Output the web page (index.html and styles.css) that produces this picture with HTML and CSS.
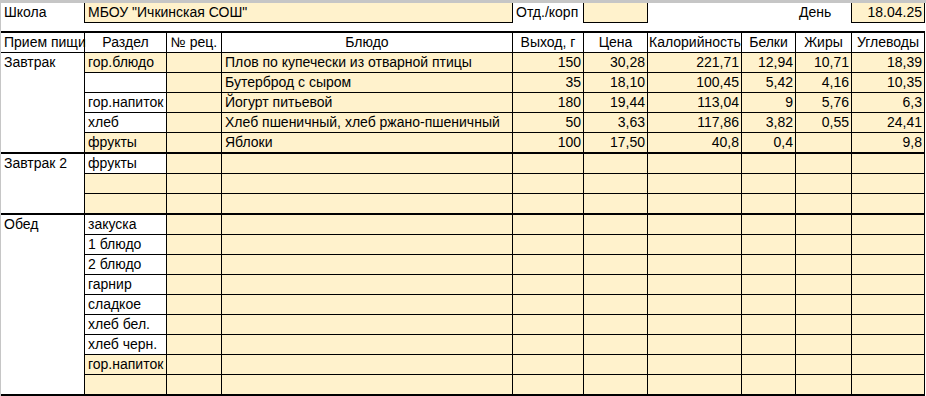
FILE: index.html
```html
<!DOCTYPE html>
<html lang="ru">
<head>
<meta charset="utf-8">
<title>Меню</title>
<link rel="stylesheet" href="styles.css">
</head>
<body>
<div class="sheet">
  <!-- top info row -->
  <div class="c info-label bR">Школа</div>
  <div class="c fill bR bB span3">МБОУ "Ичкинская СОШ"</div>
  <div class="c info-label bR">Отд./корп</div>
  <div class="c fill bR bB"></div>
  <div class="c span2"></div>
  <div class="c info-label bR">День</div>
  <div class="c fill bR bB num">18.04.25</div>

  <div class="spacer"></div>

  <!-- header -->
  <div class="c hd hd-first">Прием пищи</div>
  <div class="c hd">Раздел</div>
  <div class="c hd">№ рец.</div>
  <div class="c hd">Блюдо</div>
  <div class="c hd">Выход, г</div>
  <div class="c hd">Цена</div>
  <div class="c hd">Калорийность</div>
  <div class="c hd">Белки</div>
  <div class="c hd">Жиры</div>
  <div class="c hd">Углеводы</div>

  <!-- Завтрак -->
  <div class="c meal span5">Завтрак</div>
  <div class="c g fill">гор.блюдо</div><div class="c g fill"></div><div class="c g fill">Плов по купечески из отварной птицы</div>
  <div class="c g fill num">150</div><div class="c g fill num">30,28</div><div class="c g fill num">221,71</div><div class="c g fill num">12,94</div><div class="c g fill num">10,71</div><div class="c g fill num">18,39</div>

  <div class="c g"></div><div class="c g fill"></div><div class="c g fill">Бутерброд с сыром</div>
  <div class="c g fill num">35</div><div class="c g fill num">18,10</div><div class="c g fill num">100,45</div><div class="c g fill num">5,42</div><div class="c g fill num">4,16</div><div class="c g fill num">10,35</div>

  <div class="c g">гор.напиток</div><div class="c g fill"></div><div class="c g fill">Йогурт питьевой</div>
  <div class="c g fill num">180</div><div class="c g fill num">19,44</div><div class="c g fill num">113,04</div><div class="c g fill num">9</div><div class="c g fill num">5,76</div><div class="c g fill num">6,3</div>

  <div class="c g">хлеб</div><div class="c g fill"></div><div class="c g fill">Хлеб пшеничный, хлеб ржано-пшеничный</div>
  <div class="c g fill num">50</div><div class="c g fill num">3,63</div><div class="c g fill num">117,86</div><div class="c g fill num">3,82</div><div class="c g fill num">0,55</div><div class="c g fill num">24,41</div>

  <div class="c g end fill">фрукты</div><div class="c g end fill"></div><div class="c g end fill">Яблоки</div>
  <div class="c g end fill num">100</div><div class="c g end fill num">17,50</div><div class="c g end fill num">40,8</div><div class="c g end fill num">0,4</div><div class="c g end fill num"></div><div class="c g end fill num">9,8</div>

  <!-- Завтрак 2 -->
  <div class="c meal span3">Завтрак 2</div>
  <div class="c g">фрукты</div><div class="c g fill"></div><div class="c g fill"></div><div class="c g fill"></div><div class="c g fill"></div><div class="c g fill"></div><div class="c g fill"></div><div class="c g fill"></div><div class="c g fill"></div>
  <div class="c g fill"></div><div class="c g fill"></div><div class="c g fill"></div><div class="c g fill"></div><div class="c g fill"></div><div class="c g fill"></div><div class="c g fill"></div><div class="c g fill"></div><div class="c g fill"></div>
  <div class="c g end fill"></div><div class="c g end fill"></div><div class="c g end fill"></div><div class="c g end fill"></div><div class="c g end fill"></div><div class="c g end fill"></div><div class="c g end fill"></div><div class="c g end fill"></div><div class="c g end fill"></div>

  <!-- Обед -->
  <div class="c meal span9">Обед</div>
  <div class="c g">закуска</div><div class="c g fill"></div><div class="c g fill"></div><div class="c g fill"></div><div class="c g fill"></div><div class="c g fill"></div><div class="c g fill"></div><div class="c g fill"></div><div class="c g fill"></div>
  <div class="c g">1 блюдо</div><div class="c g fill"></div><div class="c g fill"></div><div class="c g fill"></div><div class="c g fill"></div><div class="c g fill"></div><div class="c g fill"></div><div class="c g fill"></div><div class="c g fill"></div>
  <div class="c g">2 блюдо</div><div class="c g fill"></div><div class="c g fill"></div><div class="c g fill"></div><div class="c g fill"></div><div class="c g fill"></div><div class="c g fill"></div><div class="c g fill"></div><div class="c g fill"></div>
  <div class="c g">гарнир</div><div class="c g fill"></div><div class="c g fill"></div><div class="c g fill"></div><div class="c g fill"></div><div class="c g fill"></div><div class="c g fill"></div><div class="c g fill"></div><div class="c g fill"></div>
  <div class="c g">сладкое</div><div class="c g fill"></div><div class="c g fill"></div><div class="c g fill"></div><div class="c g fill"></div><div class="c g fill"></div><div class="c g fill"></div><div class="c g fill"></div><div class="c g fill"></div>
  <div class="c g">хлеб бел.</div><div class="c g fill"></div><div class="c g fill"></div><div class="c g fill"></div><div class="c g fill"></div><div class="c g fill"></div><div class="c g fill"></div><div class="c g fill"></div><div class="c g fill"></div>
  <div class="c g">хлеб черн.</div><div class="c g fill"></div><div class="c g fill"></div><div class="c g fill"></div><div class="c g fill"></div><div class="c g fill"></div><div class="c g fill"></div><div class="c g fill"></div><div class="c g fill"></div>
  <div class="c g fill">гор.напиток</div><div class="c g fill"></div><div class="c g fill"></div><div class="c g fill"></div><div class="c g fill"></div><div class="c g fill"></div><div class="c g fill"></div><div class="c g fill"></div><div class="c g fill"></div>
  <div class="c g end fill"></div><div class="c g end fill"></div><div class="c g end fill"></div><div class="c g end fill"></div><div class="c g end fill"></div><div class="c g end fill"></div><div class="c g end fill"></div><div class="c g end fill"></div><div class="c g end fill"></div>
</div>
</body>
</html>
```

FILE: styles.css
```css
html, body {
  margin: 0;
  padding: 0;
  background: #ffffff;
}

.sheet {
  width: 926px;
  height: 396px;
  box-sizing: border-box;
  border-top: 3px solid #c6c6c6;
  border-left: 1px solid #c6c6c6;
  display: grid;
  grid-template-columns: 84px 82px 55px 291px 71px 64px 94px 54px 56px 73px;
  grid-template-rows: 20px 8px 22px 20px 20px 20px 20px 21px 20px 20px 21px 20px 20px 20px 20px 20px 20px 20px 20px 21px;
  font-family: "Liberation Sans", Arial, sans-serif;
  font-size: 14px;
  color: #000;
}

.c {
  box-sizing: border-box;
  line-height: 19px;
  padding: 0 2px 0 3px;
  white-space: nowrap;
  overflow: visible;
  min-width: 0;
}

.fill { background: #fff2cc; }
.bR { border-right: 1px solid #000; }
.bB { border-bottom: 1px solid #000; }
.num { text-align: right; padding-right: 2px; }

.span2 { grid-column: span 2; }
.span3 { grid-column: span 3; }

.spacer { grid-column: 1 / -1; }

.hd {
  border-top: 2px solid #000;
  border-bottom: 1px solid #000;
  border-right: 1px solid #000;
  text-align: center;
  padding: 0 1px;
}
.hd-first { text-align: left; padding-left: 3px; }

.g {
  border-right: 1px solid #000;
  border-bottom: 1px solid #000;
}
.g.end { border-bottom-width: 2px; }

.meal {
  border-right: 1px solid #000;
  border-bottom: 2px solid #000;
}
.span5 { grid-row: span 5; }
.span3.meal { grid-column: auto; grid-row: span 3; }
.span9 { grid-row: span 9; }
```
